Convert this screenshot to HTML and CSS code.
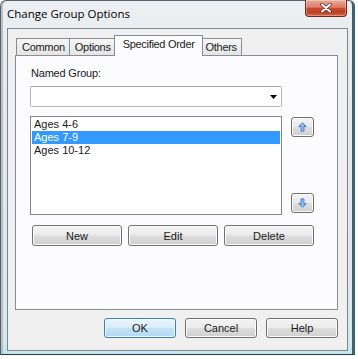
FILE: index.html
```html
<!DOCTYPE html>
<html>
<head>
<meta charset="utf-8">
<link rel="stylesheet" href="styles.css">
</head>
<body>
<div class="window">
  <div class="titlebar">
    <span class="title">Change Group Options</span>
    <div class="close">
      <svg width="12" height="10" viewBox="0 0 12 10">
        <path d="M2 1.5 L10 8.5 M10 1.5 L2 8.5" stroke="#6a3328" stroke-width="3.6" stroke-linecap="round" fill="none"/>
        <path d="M2 1.5 L10 8.5 M10 1.5 L2 8.5" stroke="#ffffff" stroke-width="2" stroke-linecap="round" fill="none"/>
      </svg>
    </div>
  </div>
  <div class="client">
    <div class="tabs">
      <div class="tab">Common</div>
      <div class="tab">Options</div>
      <div class="tab active">Specified Order</div>
      <div class="tab">Others</div>
    </div>
    <div class="panel">
      <div class="field-label">Named Group:</div>
      <div class="combo">
        <svg width="7" height="4" viewBox="0 0 7 4"><path d="M0 0 H7 L3.5 4 Z" fill="#000"/></svg>
      </div>
      <div class="list-row">
        <div class="list">
          <div class="item">Ages 4-6</div>
          <div class="item sel">Ages 7-9</div>
          <div class="item">Ages 10-12</div>
        </div>
        <div class="mover">
          <div class="btn small">
            <svg width="9" height="10" viewBox="0 0 9 10">
              <defs><linearGradient id="ga" x1="0" y1="0" x2="1" y2="0"><stop offset="0" stop-color="#3f78cf"/><stop offset="0.5" stop-color="#9cc2f0"/><stop offset="1" stop-color="#3f78cf"/></linearGradient></defs>
              <path d="M4.5 0.6 L8.4 4.6 L6 4.6 L6 9.2 L3 9.2 L3 4.6 L0.6 4.6 Z" fill="url(#ga)" stroke="#3a6fc4" stroke-width="0.7" stroke-linejoin="round"/>
            </svg>
          </div>
          <div class="btn small">
            <svg width="9" height="10" viewBox="0 0 9 10">
              <defs><linearGradient id="gb" x1="0" y1="0" x2="1" y2="0"><stop offset="0" stop-color="#3f78cf"/><stop offset="0.5" stop-color="#9cc2f0"/><stop offset="1" stop-color="#3f78cf"/></linearGradient></defs>
              <path d="M4.5 9.4 L8.4 5.4 L6 5.4 L6 0.8 L3 0.8 L3 5.4 L0.6 5.4 Z" fill="url(#gb)" stroke="#3a6fc4" stroke-width="0.7" stroke-linejoin="round"/>
            </svg>
          </div>
        </div>
      </div>
      <div class="btn-row">
        <div class="btn wide">New</div>
        <div class="btn wide">Edit</div>
        <div class="btn wide">Delete</div>
      </div>
    </div>
    <div class="dialog-buttons">
      <div class="btn dlg default">OK</div>
      <div class="btn dlg">Cancel</div>
      <div class="btn dlg">Help</div>
    </div>
  </div>
</div>
</body>
</html>
```
FILE: styles.css
```css
html, body {
  margin: 0;
  padding: 0;
  background: #ffffff;
}
body {
  font-family: "Liberation Sans", Arial, sans-serif;
  font-size: 11px;
  color: #1a1a1a;
}
.window {
  box-sizing: border-box;
  width: 355px;
  height: 355px;
  border: 1px solid #56626b;
  border-right: 3px solid #3f636b;
  border-bottom-color: #2b3a40;
  border-radius: 6px 6px 0 0;
  background: linear-gradient(180deg, #eceff1 0px, #e4e8eb 120px, #e0e6ea 290px, #d3e9f0 340px, #bfe6f0 354px);
  box-shadow: 0 4px 0 #141414, inset 2px 0 0 #b8bec3;
  display: flex;
  flex-direction: column;
}
.titlebar {
  height: 27px;
  display: flex;
  align-items: flex-start;
  flex: none;
}
.title {
  font-family: "Open Sans", "Liberation Sans", sans-serif;
  font-size: 11.5px;
  line-height: 16px;
  padding: 5px 0 0 6px;
  color: #000;
}
.close {
  margin-left: auto;
  margin-right: 5px;
  margin-top: -1px;
  box-sizing: border-box;
  width: 42px;
  height: 17px;
  border: 1px solid #6e2a1d;
  border-top: none;
  border-radius: 0 0 4px 4px;
  background: linear-gradient(180deg, #e9ab99 0%, #dc7e67 45%, #c74a2e 52%, #c13e22 78%, #d66a4a 100%);
  box-shadow: inset 0 0 0 1px rgba(255, 255, 255, 0.3);
  display: flex;
  align-items: center;
  justify-content: center;
}
.client {
  box-sizing: border-box;
  height: 323px;
  margin: 0 4px 0 6px;
  border: 1px solid #7e868c;
  background: #f0f0f0;
  padding: 6px 9px 0 7px;
  display: flex;
  flex-direction: column;
}
.tabs {
  display: flex;
  align-items: flex-end;
  padding-left: 1px;
  position: relative;
  z-index: 1;
}
.tab {
  box-sizing: border-box;
  height: 17px;
  line-height: 16px;
  padding: 0 4px 0 5px;
  border: 1px solid #898c95;
  border-bottom: none;
  margin-left: -1px;
  background: linear-gradient(180deg, #f6f6f6, #e4e4e4);
  letter-spacing: -0.3px;
  white-space: nowrap;
}
.tab:first-child {
  margin-left: 0;
}
.tab.active {
  height: 21px;
  margin: 0 -2px -1px -2px;
  padding: 0 7px 4px 8px;
  background: #fcfcfe;
  position: relative;
}
.panel {
  box-sizing: border-box;
  height: 255px;
  border: 1px solid #898c95;
  background: #fcfcfe;
  padding: 11px 0 0 14px;
}
.field-label {
  line-height: 13px;
  margin-left: 1px;
  letter-spacing: -0.2px;
}
.combo {
  box-sizing: border-box;
  width: 252px;
  height: 21px;
  margin-top: 6px;
  border: 1px solid #b9b9b9;
  border-top-color: #a3a3a3;
  border-radius: 2px;
  background: #fff;
  display: flex;
  align-items: center;
  justify-content: flex-end;
  padding-right: 4px;
}
.list-row {
  display: flex;
  margin-top: 9px;
}
.list {
  box-sizing: border-box;
  width: 252px;
  height: 99px;
  border: 1px solid #828790;
  background: #fff;
  padding: 1px;
}
.item {
  line-height: 13px;
  padding-left: 2px;
}
.item.sel {
  background: #3399ff;
  color: #fff;
}
.mover {
  margin-left: 9px;
  padding: 1px 0 2px;
  display: flex;
  flex-direction: column;
  justify-content: space-between;
}
.btn {
  box-sizing: border-box;
  border: 1px solid #707070;
  border-radius: 3px;
  background: linear-gradient(180deg, #f3f3f3 0%, #ebebeb 48%, #dddddd 52%, #d0d0d0 100%);
  box-shadow: inset 0 0 0 1px #fbfbfb;
  display: flex;
  align-items: center;
  justify-content: center;
  color: #1a1a1a;
}
.btn.small {
  width: 23px;
  height: 20px;
}
.btn-row {
  display: flex;
  gap: 6px;
  margin-top: 10px;
  padding-left: 2px;
}
.btn.wide {
  width: 90px;
  height: 21px;
}
.dialog-buttons {
  display: flex;
  justify-content: flex-end;
  gap: 9px;
  margin-top: 8px;
}
.btn.dlg {
  width: 72px;
  height: 20px;
}
.btn.default {
  border-color: #3c7fb1;
  background: linear-gradient(180deg, #e8f5fc 0%, #d9eefa 48%, #c2e3f6 52%, #b2d9f1 100%);
  box-shadow: inset 0 0 0 1px #f2fafe;
}
```
